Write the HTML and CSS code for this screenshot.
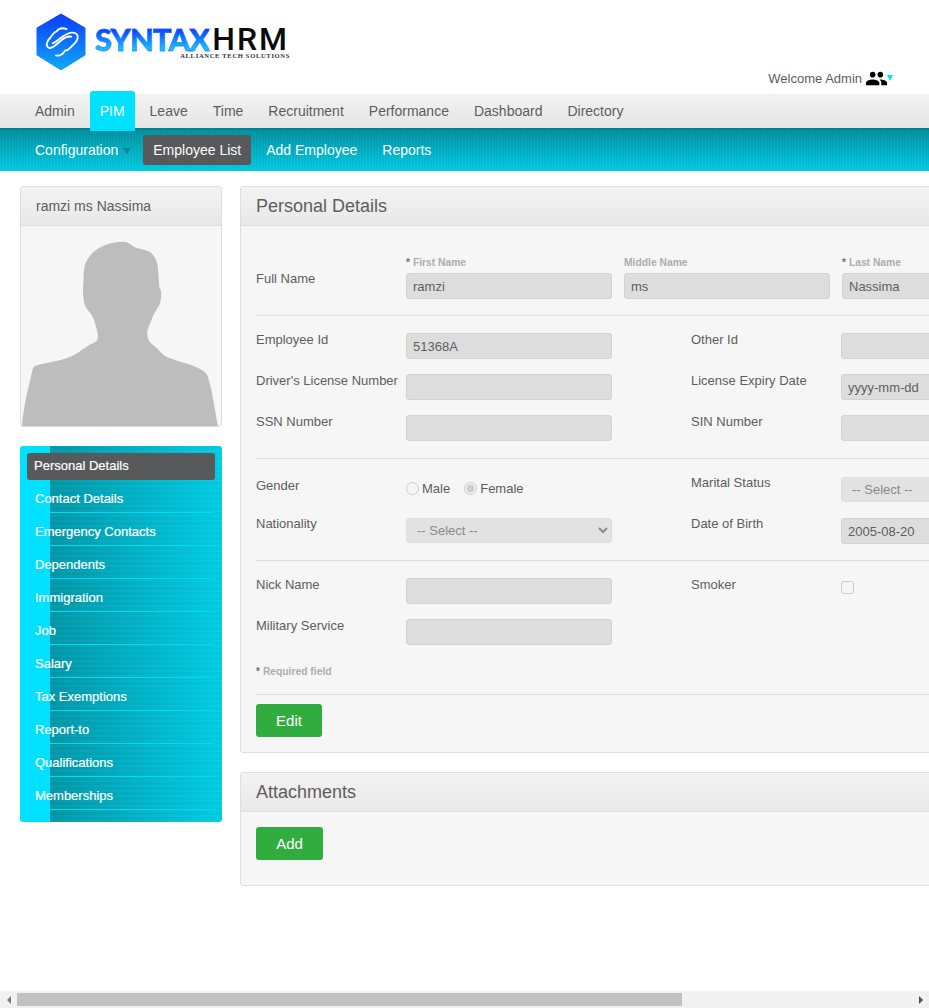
FILE: index.html
```html
<!DOCTYPE html>
<html lang="en">
    <head>
        <meta charset="UTF-8" />
        <title>SyntaxHRM - Personal Details</title>
        <link rel="stylesheet" href="styles.css">
    </head>
    <body>
        <div class="viewport">
            <div class="page">
                <header class="top">
                    <a class="logo" href="#">
                        <svg class="logo-mark" viewBox="0 0 50 57" width="50" height="57">
                            <defs>
                                <linearGradient id="hex" x1="0" y1="0" x2="0" y2="1">
                                    <stop offset="0" stop-color="#0a3dff" />
                                    <stop offset="1" stop-color="#10a8f8" />
                                </linearGradient>
                            </defs>
                            <path d="M25 1 L49 15 V42 L25 57 L1 42 V15 Z" fill="url(#hex)" stroke="url(#hex)" stroke-linejoin="round" />
                            <g transform="translate(-6 -5) scale(0.3333)" fill="none" stroke="#fff" stroke-width="5.500" stroke-linecap="round" stroke-linejoin="round">
                                <path d="M110 63 C95 58 85 62 80 70 C70 72 68 82 60 90 C50 100 45 115 58 120 C68 122 80 108 95 96 C105 88 116 84 124 86" />
                                <path d="M78 142 C90 145 100 136 105 128 C118 128 120 118 130 110 C145 98 148 82 135 75 C122 70 105 80 92 90 C82 98 74 104 68 106" />
                            </g>
                        </svg>
                        <span class="logo-words">
                            <span class="logo-name"><span class="logo-syntax">SYNTAX</span><span class="logo-hrm">HRM</span></span>
                            <span class="logo-tag">ALLIANCE TECH SOLUTIONS</span>
                        </span>
                    </a>
                    <div class="welcome">
                        <span>Welcome Admin</span>
                        <svg viewBox="0 0 24 24" width="23" height="23">
                            <path d="M16 11c1.660 0 2.990-1.340 2.990-3S17.660 5 16 5c-1.660 0-3 1.340-3 3s1.340 3 3 3zm-8 0c1.660 0 2.990-1.340 2.990-3S9.660 5 8 5C6.340 5 5 6.340 5 8s1.340 3 3 3zm0 2c-2.330 0-7 1.170-7 3.500V19h14v-2.500c0-2.330-4.670-3.500-7-3.500zm8 0c-.290 0-.620.020-.970.050 1.160.840 1.970 1.970 1.970 3.450V19h6v-2.500c0-2.330-4.670-3.500-7-3.500z" />
                        </svg>
                        <i class="welcome-caret"></i>
                    </div>
                </header>

                <nav class="mainnav">
                    <a href="#">Admin</a>
                    <a href="#" class="active">PIM</a>
                    <a href="#">Leave</a>
                    <a href="#">Time</a>
                    <a href="#">Recruitment</a>
                    <a href="#">Performance</a>
                    <a href="#">Dashboard</a>
                    <a href="#">Directory</a>
                </nav>
                <nav class="subnav">
                    <a href="#" class="has-caret">Configuration</a>
                    <a href="#" class="active">Employee List</a>
                    <a href="#">Add Employee</a>
                    <a href="#">Reports</a>
                </nav>

                <div class="content">
                    <aside class="side">
                        <div class="card">
                            <h2 class="card-name">ramzi ms Nassima</h2>
                            <div class="photo">
                                <svg viewBox="0 0 200 201" width="200" height="201">
                                    <path fill="#bdbdbd" d="M1 201 C1.500 190 3 184 5 172 L11.700 143 Q12.500 140 15 139.500 C28 136 38 135 46 132 C55 129 60 124 66 120.500 C71 117 76 116.500 76.500 113 C77.500 108 76 104 73 94 C71 87 64 83 63 76 C61.500 68 62 62 62.500 54 C62.500 44 63 38 68 31 C75 21 88 16 102 15.700 C109 16 110 20 116 22 C123 24 128 24 132 29 C137 35 137 42 137.500 50 L138.300 60.700 C141 65 140.500 72 139 77.300 C137 83 134 85 132 90 C129.500 97 126 103 126.300 108 C126.500 113 128 116 132 119 C138 123 140 128 146 131 C158 136 170 138 179 143 C185 146 187 149 187.500 153 C188.500 158 190 161 191 167 L197 201 Z" />
                                </svg>
                            </div>
                        </div>

                        <ul class="sidemenu">
                            <li class="active"><a href="#">Personal Details</a></li>
                            <li><a href="#">Contact Details</a></li>
                            <li><a href="#">Emergency Contacts</a></li>
                            <li><a href="#">Dependents</a></li>
                            <li><a href="#">Immigration</a></li>
                            <li><a href="#">Job</a></li>
                            <li><a href="#">Salary</a></li>
                            <li><a href="#">Tax Exemptions</a></li>
                            <li><a href="#">Report-to</a></li>
                            <li><a href="#">Qualifications</a></li>
                            <li><a href="#">Memberships</a></li>
                        </ul>
                    </aside>

                    <main class="main">
                        <section class="panel">
                            <h1 class="panel-title">Personal Details</h1>
                            <form class="panel-body">
                                <div class="name-row">
                                    <label class="lbl">Full Name</label>
                                    <div class="name-field">
                                        <span class="mini"><em>*</em> First Name</span>
                                        <input class="field" type="text" value="ramzi" disabled>
                                    </div>
                                    <div class="name-field">
                                        <span class="mini">Middle Name</span>
                                        <input class="field" type="text" value="ms" disabled>
                                    </div>
                                    <div class="name-field">
                                        <span class="mini"><em>*</em> Last Name</span>
                                        <input class="field" type="text" value="Nassima" disabled>
                                    </div>
                                </div>

                                <div class="form-grid first">
                                    <label class="lbl">Employee Id</label>
                                    <input class="field" type="text" value="51368A" disabled>
                                    <label class="lbl col-right">Other Id</label>
                                    <input class="field" type="text" disabled>

                                    <label class="lbl">Driver's License Number</label>
                                    <input class="field" type="text" disabled>
                                    <label class="lbl col-right">License Expiry Date</label>
                                    <input class="field" type="text" value="yyyy-mm-dd" disabled>

                                    <label class="lbl">SSN Number</label>
                                    <input class="field" type="text" disabled>
                                    <label class="lbl col-right">SIN Number</label>
                                    <input class="field" type="text" disabled>
                                </div>

                                <div class="form-grid second">
                                    <label class="lbl gender-lbl">Gender</label>
                                    <div class="radios">
                                        <label><input type="radio" name="gender" disabled>Male</label>
                                        <label><input type="radio" name="gender" checked disabled>Female</label>
                                    </div>
                                    <label class="lbl col-right">Marital Status</label>
                                    <select class="field" disabled><option>-- Select --</option></select>

                                    <label class="lbl">Nationality</label>
                                    <select class="field" disabled><option>-- Select --</option></select>
                                    <label class="lbl col-right">Date of Birth</label>
                                    <input class="field" type="text" value="2005-08-20" disabled>
                                </div>

                                <div class="form-grid third">
                                    <label class="lbl">Nick Name</label>
                                    <input class="field" type="text" disabled>
                                    <label class="lbl col-right">Smoker</label>
                                    <div class="check"><input type="checkbox" disabled></div>

                                    <label class="lbl">Military Service</label>
                                    <input class="field" type="text" disabled>
                                </div>

                                <p class="required"><em>*</em> Required field</p>

                                <div class="actions">
                                    <button class="btn" type="button">Edit</button>
                                </div>
                            </form>
                        </section>

                        <section class="panel attachments">
                            <h1 class="panel-title">Attachments</h1>
                            <div class="panel-body">
                                <button class="btn btn-add" type="button">Add</button>
                            </div>
                        </section>
                    </main>
                </div>
            </div>
        </div>

        <div class="hscroll">
            <span class="arrow arrow-left"></span>
            <div class="hscroll-track"><div class="hscroll-thumb"></div></div>
            <span class="arrow arrow-right"></span>
        </div>
    </body>
</html>
```

FILE: styles.css
```css
* {
    margin: 0;
    padding: 0;
    box-sizing: border-box;
}
html,
body {
    height: 100%;
    overflow: hidden;
}
body {
    display: flex;
    flex-direction: column;
    font-family: "Liberation Sans", Arial, sans-serif;
    font-size: 14px;
    color: #5d5d5d;
    background: #fff;
}
a {
    text-decoration: none;
    color: inherit;
}
ul {
    list-style: none;
}
.viewport {
    flex: 1;
    min-height: 0;
    overflow: hidden;
}
.page {
    width: 1250px;
}

/* header */
.top {
    display: flex;
    justify-content: space-between;
    height: 94px;
    padding: 13px 36px 0 36px;
    width: 929px;
}
.logo {
    display: flex;
    align-items: flex-start;
    gap: 8px;
    height: 60px;
}
.logo-words {
    display: flex;
    flex-direction: column;
    padding-top: 12px;
}
.logo-name {
    display: flex;
    height: 27px;
    padding-left: 1px;
    line-height: 28px;
    white-space: nowrap;
}
.logo-syntax {
    font-family: Lato, "Open Sans", sans-serif;
    font-size: 31px;
    font-weight: 900;
    letter-spacing: -1px;
    background: linear-gradient(#0a3dff 15%, #1cb8ff 85%);
    -webkit-background-clip: text;
    background-clip: text;
    color: transparent;
    -webkit-text-stroke: 0.4px #1a78ff;
}
.logo-hrm {
    margin-left: 3px;
    font-family: Roboto, sans-serif;
    font-size: 32px;
    font-weight: 500;
    letter-spacing: 2px;
    color: #0b0b0b;
}
.logo-tag {
    align-self: flex-end;
    margin-right: -1px;
    font-family: "Liberation Serif", serif;
    font-size: 6.500px;
    font-weight: 700;
    line-height: 7px;
    letter-spacing: 0.7px;
    color: #333;
    white-space: nowrap;
}
.welcome {
    display: flex;
    align-items: center;
    align-self: flex-start;
    margin-top: 54px;
    font-size: 13px;
    color: #5d5d5d;
}
.welcome svg {
    margin-left: 3px;
}
.welcome-caret {
    width: 0;
    height: 0;
    margin: -2px 0 0 -1px;
    border-left: 3.500px solid transparent;
    border-right: 3.500px solid transparent;
    border-top: 6px solid #00e1ff;
}

/* navigation */
.mainnav {
    display: flex;
    align-items: center;
    height: 34px;
    padding-left: 22.500px;
    background: linear-gradient(#f3f3f3, #e5e5e5);
    position: relative;
    z-index: 1;
}
.mainnav a {
    padding: 0 12.500px;
    line-height: 34px;
    color: #5d5d5d;
}
.mainnav a.active {
    height: 40px;
    margin: 0 2.500px;
    padding: 0 10px;
    line-height: 40px;
    color: #fff;
    background: #00e1ff;
    border-radius: 3px 3px 0 0;
}
.subnav {
    display: flex;
    align-items: center;
    height: 43px;
    padding-left: 22.500px;
    padding-bottom: 2px;
    color: #fff;
    border-top: 2px solid #00838f;
    background:
        repeating-linear-gradient(90deg, rgba(255, 255, 255, 0.05) 0 1px, transparent 1px 3px),
        linear-gradient(#008f9f, #00c9e2);
}
.subnav a {
    padding: 0 12.500px;
    line-height: 30px;
}
.subnav a.has-caret {
    position: relative;
    padding-right: 25px;
}
.subnav a.has-caret::after {
    content: "";
    position: absolute;
    right: 12px;
    top: 13px;
    border-left: 4px solid transparent;
    border-right: 4px solid transparent;
    border-top: 6px solid #00848f;
}
.subnav a.active {
    margin-right: 2.500px;
    padding: 0 10px;
    background: #58595b;
    border-radius: 3px;
}

/* layout */
.content {
    display: flex;
    align-items: flex-start;
    gap: 18px;
    padding: 15px 20px 0;
}
.side {
    flex: 0 0 202px;
}
.main {
    flex: 1;
}

/* employee card */
.card {
    height: 241px;
    border: 1px solid #dedede;
    border-radius: 3px;
    background: #f6f6f6;
    overflow: hidden;
}
.card-name {
    height: 39px;
    padding-left: 15px;
    font-size: 14px;
    font-weight: 400;
    line-height: 38px;
    background: linear-gradient(#f3f3f3, #e8e8e8);
    border-bottom: 1px solid #dedede;
}
.photo svg {
    display: block;
}

/* side menu */
.sidemenu {
    height: 376px;
    margin-top: 19px;
    padding: 7px 8px 0 30px;
    border-radius: 3px;
    background:
        linear-gradient(90deg, #00e1ff 0 30px, transparent 30px),
        repeating-linear-gradient(0deg, rgba(255, 255, 255, 0.04) 0 2px, transparent 2px 5px),
        linear-gradient(90deg, #008c9c 0, #00cbe3 100%);
}
.sidemenu li {
    height: 33px;
    color: #fff;
    border-bottom: 1px solid #00dcf8;
}
.sidemenu li a {
    display: block;
    margin-left: -15px;
    padding-top: 11px;
    line-height: 16px;
    font-size: 13px;
    -webkit-text-stroke: 0.2px #fff;
}
.sidemenu li.active {
    height: 27px;
    margin: 0 -1px 0 -23px;
    padding-left: 7px;
    background: #58595b;
    border: 0;
    border-radius: 3px;
}
.sidemenu li.active a {
    margin-left: 0;
    padding-top: 5px;
}

/* panels */
.panel {
    height: 567px;
    border: 1px solid #dedede;
    border-radius: 3px;
    background: #f6f6f6;
}
.panel-title {
    height: 39px;
    padding-left: 15px;
    font-size: 18px;
    font-weight: 400;
    line-height: 38px;
    color: #5d5d5d;
    background: linear-gradient(#f3f3f3, #e8e8e8);
    border-bottom: 1px solid #dedede;
}
.panel-body {
    padding: 0 15px;
}
.attachments {
    height: 114px;
    margin-top: 19px;
}
.attachments .panel-body {
    padding-top: 15px;
}

/* form */
.lbl {
    display: block;
    font-size: 13px;
    line-height: 13px;
    color: #5d5d5d;
    white-space: nowrap;
}
.field {
    display: block;
    width: 206px;
    height: 26px;
    padding: 0 6px;
    font-family: inherit;
    font-size: 13px;
    color: #5d5d5d;
    background-color: #dddddd;
    border: 1px solid #d2d2d2;
    border-radius: 3px;
    opacity: 1;
}
select.field {
    height: 25px;
    color: #8a8a8a;
    background-color: #e2e2e2;
    border-color: #dedede;
}
.name-row {
    display: grid;
    grid-template-columns: 138px 206px 206px 206px;
    column-gap: 12px;
    height: 90px;
    padding-top: 30px;
    border-bottom: 1px solid #dedede;
}
.name-row .lbl {
    margin-top: 16px;
}
.name-field .mini {
    display: block;
    height: 17px;
    font-size: 10.300px;
    font-weight: 700;
    line-height: 13px;
    color: #adadad;
}
.mini em,
.required em {
    font-style: normal;
    color: #8a6a5a;
}
.form-grid {
    display: grid;
    grid-template-columns: 150px 206px 229px 206px;
    grid-auto-rows: 26px;
    row-gap: 15px;
    border-bottom: 1px solid #dedede;
}
.col-right {
    margin-left: 79px;
}
.form-grid.first {
    padding: 17px 0;
}
.form-grid.second {
    padding: 18px 0 16px;
}
.form-grid.second .lbl {
    margin-top: -1px;
}
.form-grid.second .gender-lbl {
    margin-top: 2px;
}
.form-grid.third {
    padding: 17px 0 0;
    border-bottom: 0;
}
.radios {
    display: flex;
    gap: 14px;
    padding-top: 4px;
    font-size: 13px;
}
.radios label {
    display: flex;
    align-items: center;
    height: 14px;
    padding-top: 1px;
    line-height: 14px;
}
.radios input {
    width: 13px;
    height: 13px;
    margin: 0 3px 0 0;
}
.check {
    padding-top: 3px;
}
.check input {
    display: block;
    width: 13px;
    height: 13px;
}
.required {
    height: 29px;
    margin-top: 20px;
    font-size: 10.300px;
    font-weight: 700;
    line-height: 13px;
    color: #adadad;
}
.actions {
    padding-top: 9px;
    border-top: 1px solid #dedede;
}
.btn {
    display: block;
    width: 66px;
    height: 33px;
    font-family: inherit;
    font-size: 15px;
    color: #fff;
    background: #31ad40;
    border: 0;
    border-radius: 3px;
}
.btn-add {
    width: 67px;
}

/* window scrollbar */
.hscroll {
    display: flex;
    flex: 0 0 17px;
    background: #f1f1f1;
}
.hscroll-track {
    flex: 1;
    padding: 2px 0;
}
.hscroll-thumb {
    width: 665px;
    height: 13px;
    background: #c1c1c1;
}
.arrow {
    display: flex;
    align-items: center;
    justify-content: center;
    width: 17px;
}
.arrow::before {
    content: "";
    border-top: 4px solid transparent;
    border-bottom: 4px solid transparent;
}
.arrow-left::before {
    border-right: 4px solid #7a7a7a;
}
.arrow-right::before {
    border-left: 4px solid #505050;
}
```
